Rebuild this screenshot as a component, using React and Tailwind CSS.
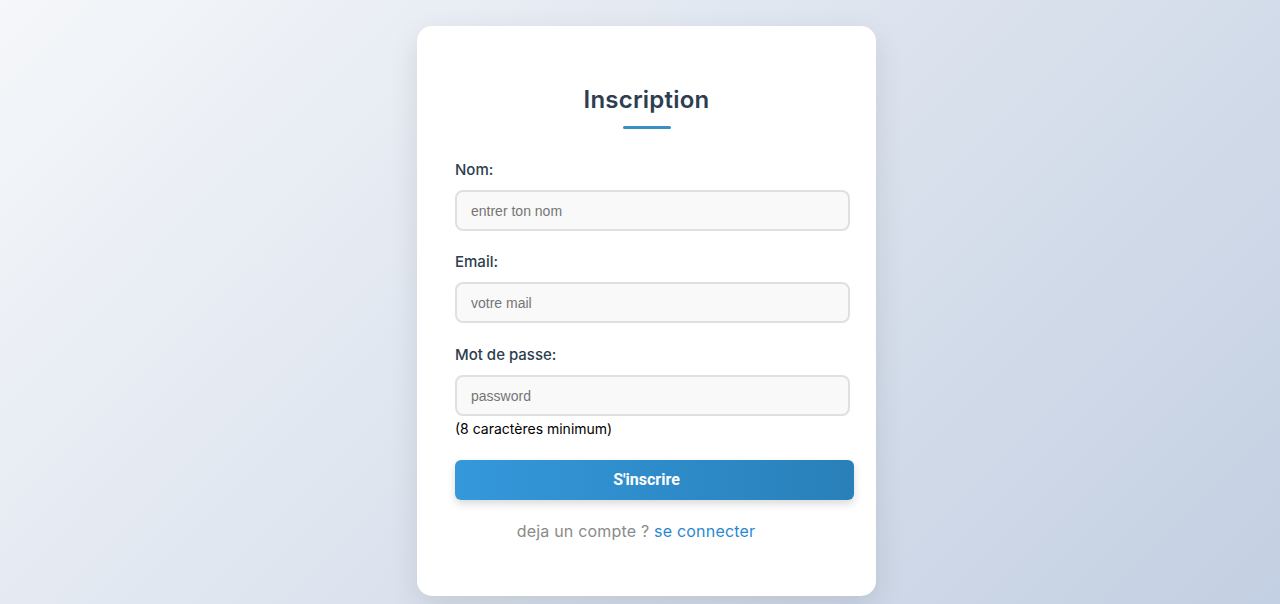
export default function App() {
  const font = { fontFamily: 'Inter, "Noto Sans", sans-serif' };
  return (
    <div className="w-full h-[604px] overflow-hidden bg-[linear-gradient(135deg,#f5f7fa_0%,#c3cfe2_100%)] flex justify-center pl-[13px]" style={font}>
      <div className="w-[459px] h-[570px] mt-[26px] rounded-[15px] bg-white shadow-[0_10px_30px_rgba(0,0,0,0.1)] px-[38px] pt-[59px] flex flex-col">
        <h1 className="text-center text-[24px] leading-[30px] font-semibold text-[#2c3e50] tracking-[0.2px]">Inscription</h1>
        <div className="mx-auto mt-[11px] w-[48px] h-[3px] bg-[#3a8fc4] rounded-full" />
        <Field label="Nom:" placeholder="entrer ton nom" mt="mt-[31px]" />
        <Field label="Email:" placeholder="votre mail" mt="mt-[21px]" />
        <Field label="Mot de passe:" placeholder="password" mt="mt-[22px]" />
        <p className="mt-[4px] text-[14px] leading-[18px] text-black">(8 caractères minimum)</p>
        <button className="mt-[22px] w-[399px] h-[40px] pr-[16px] rounded-[6px] bg-[linear-gradient(90deg,#3498db,#2980b9)] text-white text-[16px] font-bold shadow-[0_4px_8px_rgba(0,0,0,0.15)]" style={{ fontFamily: 'Roboto, "Liberation Sans", Arial, sans-serif' }}>
          S'inscrire
        </button>
        <p className="mt-[19px] pr-[21px] text-center text-[16px] leading-[24px] tracking-[0.2px] text-[#8a8a8a]">
          deja un compte ? <a className="text-[#2b88d0]">se connecter</a>
        </p>
      </div>
    </div>
  );
}

function Field({ label, placeholder, mt }) {
  return (
    <div className={mt}>
      <label className="block text-[15px] leading-[20px] font-medium text-[#2c3e50]">{label}</label>
      <input
        placeholder={placeholder}
        className="mt-[10px] block w-[395px] h-[41px] rounded-[8px] border-2 border-[#e0e0e0] bg-[#f9f9f9] px-[14px] text-[14px] placeholder:text-[#757575] outline-none"
        style={{ fontFamily: '"Liberation Sans", Arial, sans-serif' }}
      />
    </div>
  );
}
